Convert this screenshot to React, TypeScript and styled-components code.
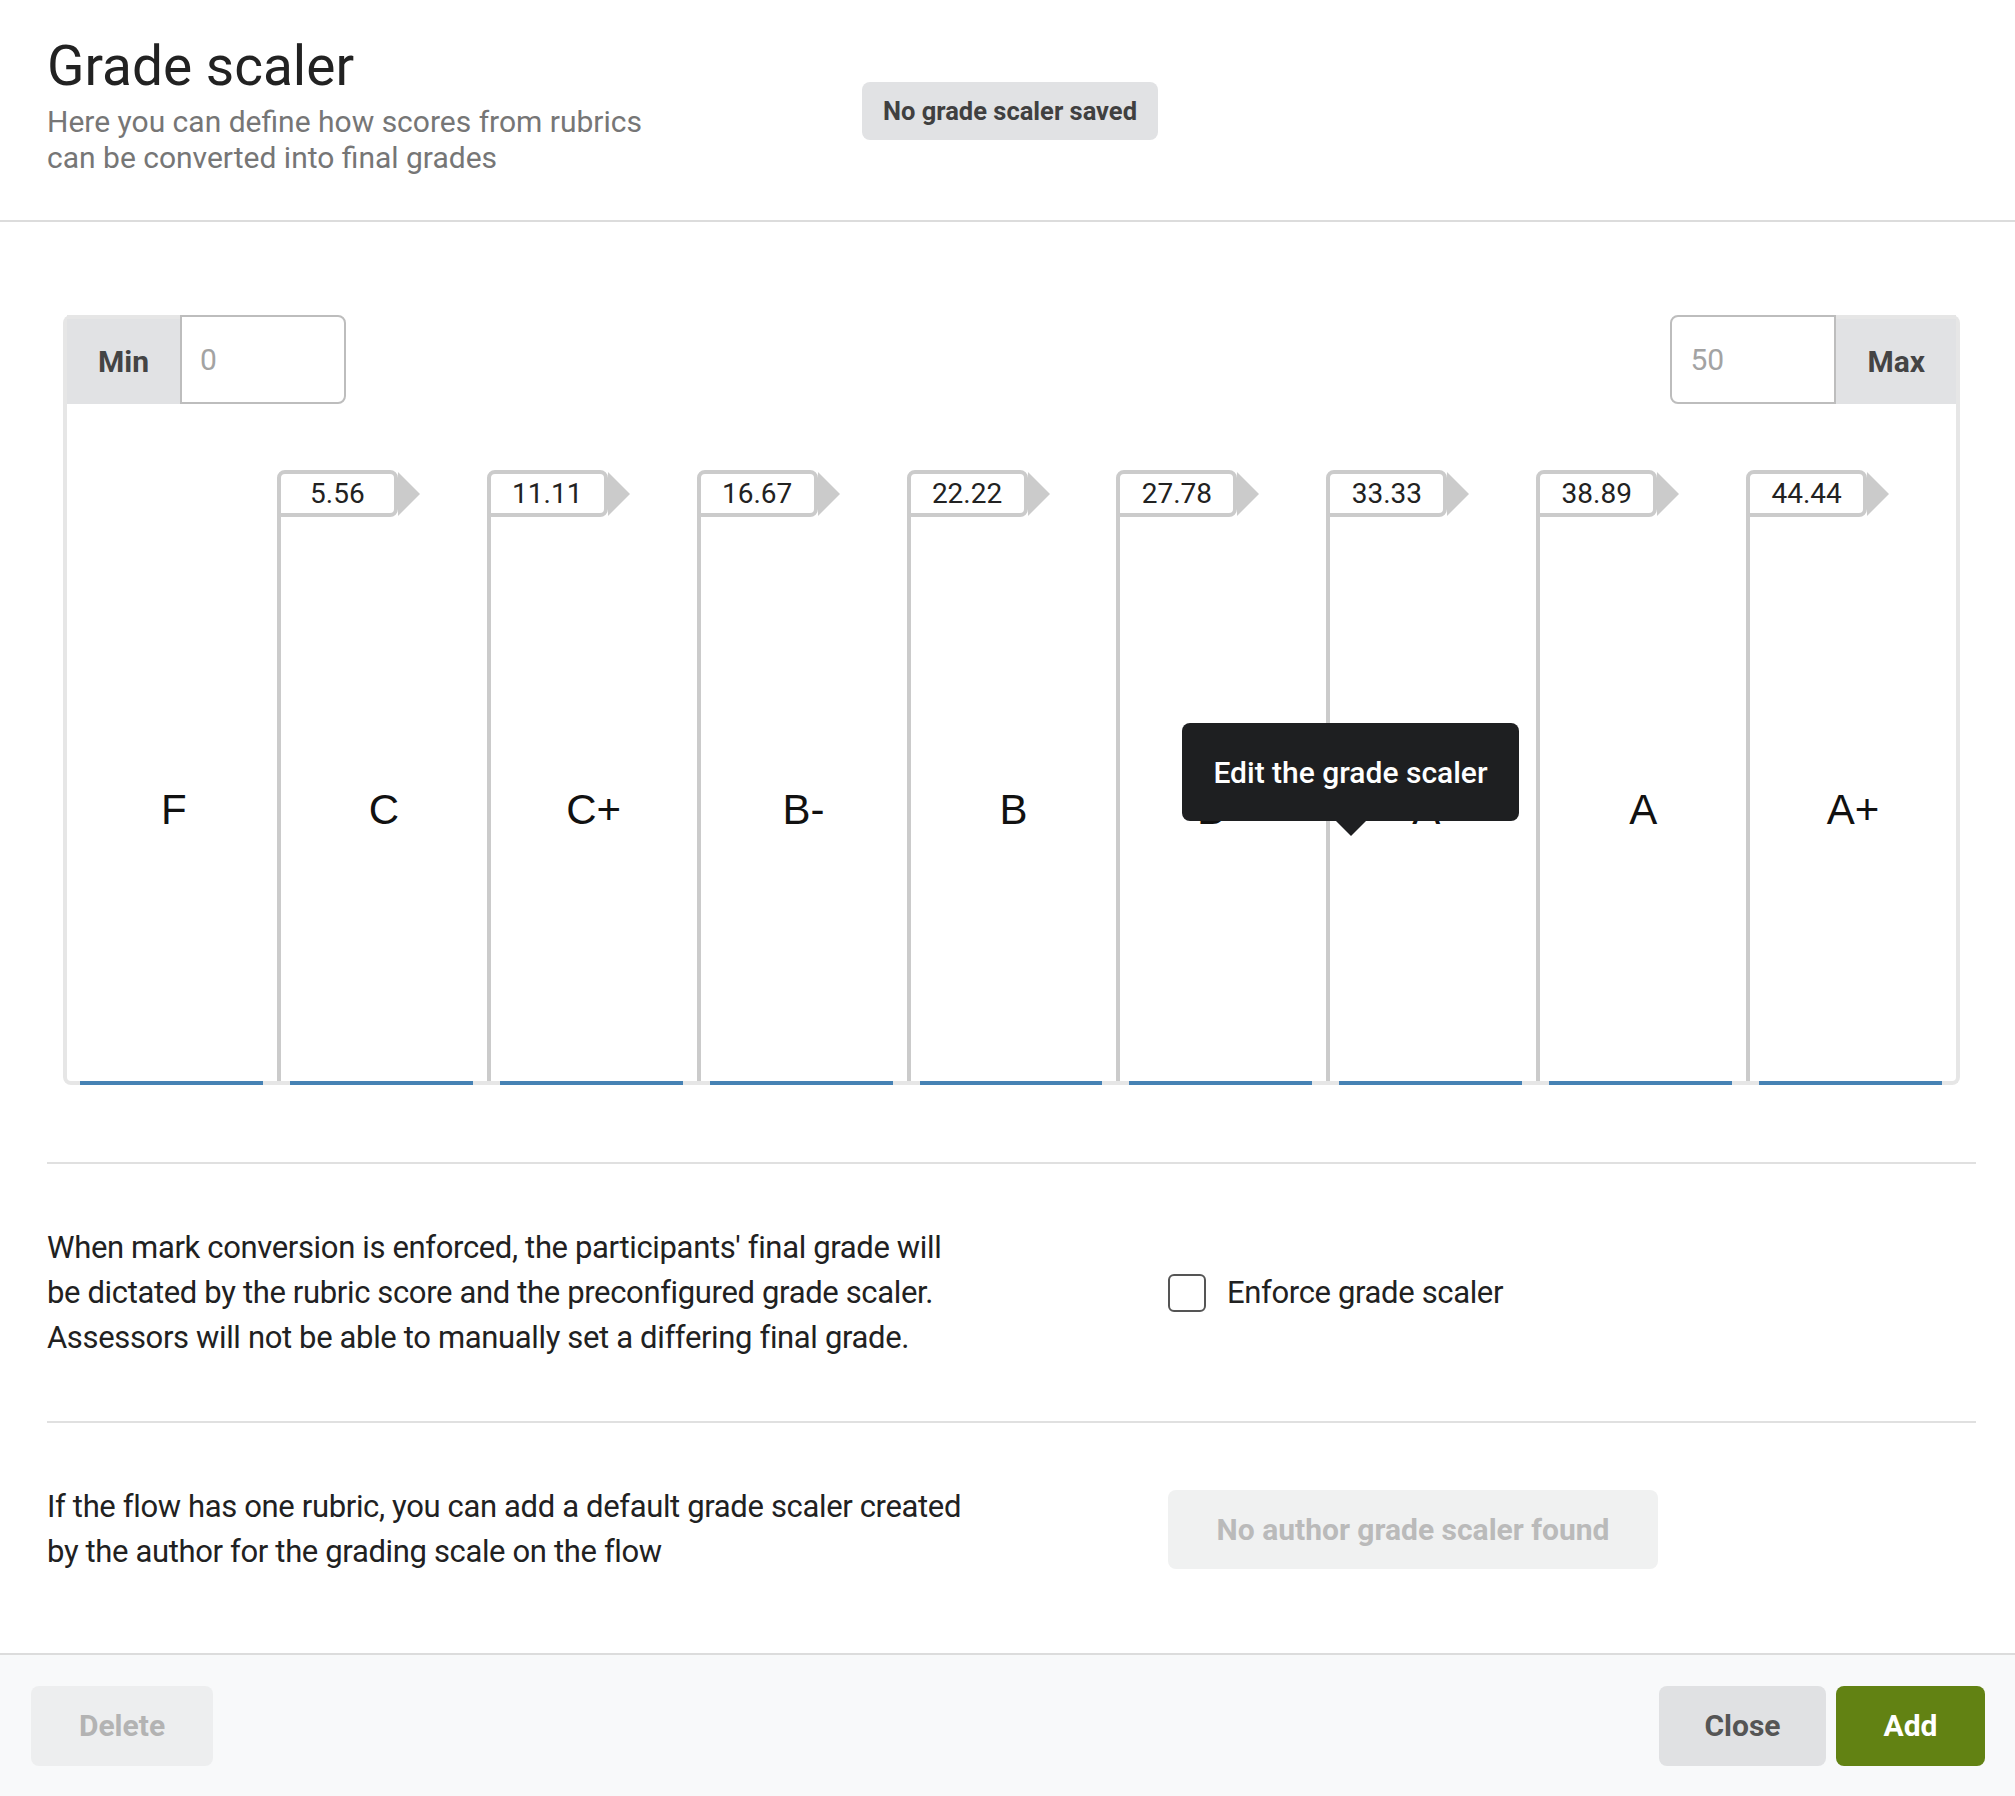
import React from "react";
import styled, { createGlobalStyle } from "styled-components";

const GlobalStyle = createGlobalStyle`
  html, body {
    margin: 0;
    padding: 0;
  }
  body {
    font-family: Roboto, "Noto Sans", sans-serif;
    color: #212121;
    background: #fff;
  }
  * {
    box-sizing: border-box;
  }
`;

const Page = styled.div`
  display: flex;
  flex-direction: column;
  height: 100vh;
  overflow: hidden;
`;

const Header = styled.header`
  display: flex;
  align-items: flex-start;
  height: 222px;
  flex-shrink: 0;
  padding: 34px 0 0 47px;
  border-bottom: 2px solid #dcdcdc;
`;

const TitleBlock = styled.div`
  width: 815px;
`;

const Title = styled.h1`
  margin: 0;
  font-size: 55px;
  line-height: 64px;
  font-weight: 400;
  color: #222;
`;

const Subtitle = styled.p`
  margin: 6px 0 0;
  font-size: 30px;
  line-height: 36px;
  color: #767676;
`;

const Badge = styled.span`
  display: inline-flex;
  align-items: center;
  height: 58px;
  margin-top: 48px;
  padding: 0 21px;
  border-radius: 8px;
  background: #e1e2e4;
  color: #404040;
  font-size: 25.5px;
  font-weight: 700;
`;

const Main = styled.main`
  flex: 1;
  padding: 0 39px 0 47px;
`;

const ChartBox = styled.div`
  position: relative;
  display: flex;
  flex-direction: column;
  height: 770px;
  margin: 93px 16px 0;
  border: 4px solid #e6e6e6;
  border-top: 0;
  border-radius: 8px;
`;

const TopRow = styled.div`
  display: flex;
  justify-content: space-between;
  height: 89px;
`;

const InputGroup = styled.div`
  display: flex;
`;

const GroupLabel = styled.span`
  display: flex;
  align-items: center;
  padding: 0 31px;
  border-top: 4px solid #e6e6e6;
  background: #e1e2e4;
  color: #444;
  font-size: 30px;
  font-weight: 700;
`;

const GroupInput = styled.input<{ $side: "left" | "right" }>`
  width: 166px;
  height: 89px;
  padding: 0 18px;
  border: 2px solid #bdbdbd;
  border-radius: ${({ $side }) => ($side === "left" ? "8px 0 0 8px" : "0 8px 8px 0")};
  font-family: Roboto, sans-serif;
  font-size: 30px;
  color: #333;
  outline: none;
  &::placeholder {
    color: #a3a3a3;
  }
`;

const Columns = styled.div`
  display: grid;
  grid-template-columns: repeat(9, 1fr);
  flex: 1;
`;

const Column = styled.div`
  display: flex;
  flex-direction: column;
  min-width: 0;
  padding-top: 66px;
`;

const Tag = styled.div<{ $hidden?: boolean }>`
  display: flex;
  align-items: center;
  height: 47px;
  visibility: ${({ $hidden }) => ($hidden ? "hidden" : "visible")};
`;

const TagBox = styled.div`
  display: flex;
  align-items: center;
  justify-content: center;
  width: 121px;
  height: 47px;
  border: 4px solid #cbcbcb;
  border-radius: 8px 8px 8px 0;
  background: #fff;
  font-size: 28px;
  color: #222;
`;

const TagArrow = styled.span`
  width: 0;
  height: 0;
  border-top: 22px solid transparent;
  border-bottom: 22px solid transparent;
  border-left: 22px solid #cbcbcb;
`;

const Body = styled.div<{ $first?: boolean }>`
  flex: 1;
  display: flex;
  align-items: center;
  justify-content: center;
  padding-top: 22px;
  border-left: 4px solid ${({ $first }) => ($first ? "transparent" : "#cbcbcb")};
  font-family: "Liberation Sans", Arial, sans-serif;
  font-size: 42px;
  color: #111;
`;

const Bar = styled.div`
  height: 4px;
  margin: 0 14px -4px 13px;
  background: #4682b4;
`;

const Tooltip = styled.div`
  position: absolute;
  left: 1115px;
  top: 408px;
  display: flex;
  align-items: center;
  justify-content: center;
  width: 337px;
  height: 98px;
  border-radius: 8px;
  background: #1e1f21;
  color: #fff;
  font-size: 30px;
  font-weight: 500;

  &::after {
    content: "";
    position: absolute;
    left: 50%;
    bottom: -15px;
    transform: translateX(-50%);
    border-left: 15px solid transparent;
    border-right: 15px solid transparent;
    border-top: 15px solid #1e1f21;
  }
`;

const Separator = styled.hr<{ $top?: number }>`
  height: 2px;
  margin: ${({ $top }) => $top ?? 0}px 0 0;
  border: 0;
  background: #e0e0e0;
`;

const Row = styled.section`
  display: grid;
  grid-template-columns: 1121px auto;
  align-items: center;
  padding: 61px 0;
`;

const Paragraph = styled.p`
  margin: 0;
  font-size: 31px;
  line-height: 45px;
  letter-spacing: -0.35px;
  color: #212121;
`;

const CheckLabel = styled.label`
  display: flex;
  align-items: center;
  gap: 21px;
  font-size: 31px;
  letter-spacing: -0.35px;
  color: #212121;
`;

const CheckBox = styled.span`
  width: 38px;
  height: 38px;
  border: 2.5px solid #555;
  border-radius: 6px;
  background: #fff;
`;

const GhostButton = styled.button`
  justify-self: start;
  width: 490px;
  height: 79px;
  border: 0;
  border-radius: 8px;
  background: #f0f1f1;
  color: #bababa;
  font-family: Roboto, sans-serif;
  font-size: 30px;
  font-weight: 700;
`;

const Footer = styled.footer`
  display: flex;
  align-items: center;
  justify-content: space-between;
  height: 143px;
  flex-shrink: 0;
  padding: 0 30px 0 31px;
  border-top: 2px solid #dcdcdc;
  background: #f8f9fa;
`;

const FooterGroup = styled.div`
  display: flex;
  gap: 10px;
`;

const variants = {
  disabled: { bg: "#edeeef", fg: "#b3b3b3" },
  neutral: { bg: "#e0e1e3", fg: "#555" },
  primary: { bg: "#628213", fg: "#fff" },
};

const Button = styled.button<{ $variant: keyof typeof variants; $width: number }>`
  width: ${({ $width }) => $width}px;
  height: 80px;
  border: 0;
  border-radius: 8px;
  background: ${({ $variant }) => variants[$variant].bg};
  color: ${({ $variant }) => variants[$variant].fg};
  font-family: Roboto, sans-serif;
  font-size: 30px;
  font-weight: 700;
`;

const grades = ["F", "C", "C+", "B-", "B", "B+", "A-", "A", "A+"];
const max = 50;

export default function App() {
  return (
    <Page>
      <GlobalStyle />
      <Header>
        <TitleBlock>
          <Title>Grade scaler</Title>
          <Subtitle>
            Here you can define how scores from rubrics
            <br />
            can be converted into final grades
          </Subtitle>
        </TitleBlock>
        <Badge>No grade scaler saved</Badge>
      </Header>

      <Main>
        <ChartBox>
          <TopRow>
            <InputGroup>
              <GroupLabel>Min</GroupLabel>
              <GroupInput $side="right" placeholder="0" />
            </InputGroup>
            <InputGroup>
              <GroupInput $side="left" placeholder="50" />
              <GroupLabel>Max</GroupLabel>
            </InputGroup>
          </TopRow>
          <Columns>
            {grades.map((grade, i) => (
              <Column key={grade}>
                <Tag $hidden={i === 0}>
                  <TagBox>{((max / grades.length) * i).toFixed(2)}</TagBox>
                  <TagArrow />
                </Tag>
                <Body $first={i === 0}>{grade}</Body>
                <Bar />
              </Column>
            ))}
          </Columns>
          <Tooltip>Edit the grade scaler</Tooltip>
        </ChartBox>

        <Separator $top={77} />
        <Row>
          <Paragraph>
            When mark conversion is enforced, the participants' final grade will
            <br />
            be dictated by the rubric score and the preconfigured grade scaler.
            <br />
            Assessors will not be able to manually set a differing final grade.
          </Paragraph>
          <CheckLabel>
            <CheckBox />
            Enforce grade scaler
          </CheckLabel>
        </Row>
        <Separator />
        <Row>
          <Paragraph>
            If the flow has one rubric, you can add a default grade scaler created
            <br />
            by the author for the grading scale on the flow
          </Paragraph>
          <GhostButton>No author grade scaler found</GhostButton>
        </Row>
      </Main>

      <Footer>
        <Button $variant="disabled" $width={182}>
          Delete
        </Button>
        <FooterGroup>
          <Button $variant="neutral" $width={167}>
            Close
          </Button>
          <Button $variant="primary" $width={149}>
            Add
          </Button>
        </FooterGroup>
      </Footer>
    </Page>
  );
}
